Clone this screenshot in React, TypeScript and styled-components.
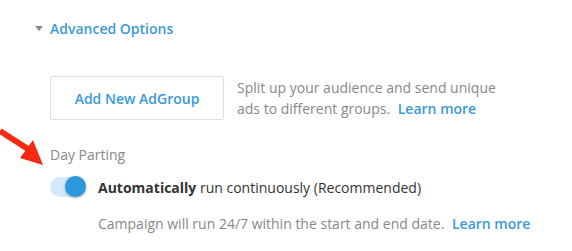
import React from 'react';
import styled, { createGlobalStyle } from 'styled-components';

const GlobalStyle = createGlobalStyle`
  html, body {
    margin: 0;
    padding: 0;
    background: #ffffff;
  }
  body {
    font-family: 'Open Sans', 'Noto Sans', sans-serif;
    font-size: 14px;
    color: #888888;
  }
`;

const Page = styled.div`
  position: relative;
  width: 572px;
  height: 251px;
  padding: 17px 0 0 35px;
  box-sizing: border-box;
`;

const SectionToggle = styled.div`
  display: flex;
  align-items: center;
  gap: 7px;
  height: 22px;
  color: #3a9ad9;
  font-weight: 600;
  font-size: 14px;
  cursor: pointer;
`;

const Caret = styled.span`
  width: 0;
  height: 0;
  border-left: 4px solid transparent;
  border-right: 4px solid transparent;
  border-top: 5px solid #8a8a8a;
  margin-top: 1px;
`;

const Body = styled.div`
  padding-left: 15px;
`;

const AdGroupRow = styled.div`
  display: flex;
  align-items: center;
  gap: 13px;
  margin-top: 37px;
`;

const OutlineButton = styled.button`
  width: 174px;
  height: 44px;
  background: #fff;
  border: 1px solid #dddddd;
  border-radius: 2px;
  color: #3a9ad9;
  font-family: 'Open Sans', 'Noto Sans', sans-serif;
  font-weight: 600;
  font-size: 14px;
  padding: 0;
  cursor: pointer;
`;

const HelpText = styled.p`
  margin: 0;
  line-height: 21px;
  color: #888888;
`;

const Link = styled.a`
  color: #3a9ad9;
  font-weight: 600;
  text-decoration: none;
  margin-left: 4px;
`;

const FieldLabel = styled.div`
  margin-top: 25px;
  line-height: 20px;
  color: #888888;
`;

const OptionRow = styled.div`
  display: flex;
  align-items: center;
  gap: 13px;
  margin-top: 12px;
  color: #333333;
`;

const Switch = styled.span<{ on: boolean }>`
  position: relative;
  display: inline-block;
  width: 35px;
  height: 20px;
  border-radius: 10px;
  background: ${(p) => (p.on ? '#d3e8f8' : '#e3e3e3')};
  &::after {
    content: '';
    position: absolute;
    top: -1px;
    left: ${(p) => (p.on ? '15px' : '0')};
    width: 21px;
    height: 21px;
    border-radius: 50%;
    background: #2a97de;
    box-shadow: 0 1px 3px rgba(0, 0, 0, 0.3);
  }
`;

const Note = styled.p`
  margin: 17px 0 0 48px;
  line-height: 20px;
  color: #888888;
`;

const Arrow = styled.svg`
  position: absolute;
  left: 0;
  top: 125px;
`;

export default function App() {
  return (
    <>
      <GlobalStyle />
      <Page>
        <SectionToggle>
          <Caret />
          Advanced Options
        </SectionToggle>
        <Body>
          <AdGroupRow>
            <OutlineButton type="button">Add New AdGroup</OutlineButton>
            <HelpText>
              Split up your audience and send unique
              <br />
              ads to different groups. <Link href="#">Learn more</Link>
            </HelpText>
          </AdGroupRow>
          <FieldLabel>Day Parting</FieldLabel>
          <OptionRow>
            <Switch on />
            <span>
              <b>Automatically</b> run continuously (Recommended)
            </span>
          </OptionRow>
          <Note>
            Campaign will run 24/7 within the start and end date. <Link href="#">Learn more</Link>
          </Note>
        </Body>
        <Arrow width="50" height="45" viewBox="0 0 50 45">
          <path d="M0 6 L28 24" stroke="#f52a12" strokeWidth="6" strokeLinecap="butt" />
          <path d="M33 15 L20 33 L43 40 Z" fill="#f52a12" />
        </Arrow>
      </Page>
    </>
  );
}
